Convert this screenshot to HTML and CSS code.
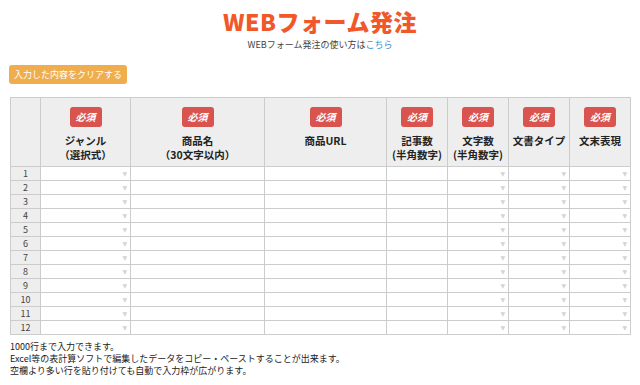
FILE: index.html
```html
<!DOCTYPE html>
<html lang="ja">
<head>
    <meta charset="UTF-8">
    <title>WEBフォーム発注</title>
    <link rel="stylesheet" href="styles.css">
</head>
<body>
    <h1 class="title">WEBフォーム発注</h1>
    <p class="subtitle">WEBフォーム発注の使い方は<a href="#">こちら</a></p>

    <button class="clear-btn">入力した内容をクリアする</button>

    <table class="order-table">
        <thead>
            <tr>
                <th class="num"></th>
                <th class="c-genre"><span class="req">必須</span><span class="label">ジャンル<br>（選択式）</span></th>
                <th class="c-name"><span class="req">必須</span><span class="label">商品名<br>（30文字以内）</span></th>
                <th class="c-url"><span class="req">必須</span><span class="label">商品URL</span></th>
                <th class="c-sm"><span class="req">必須</span><span class="label">記事数<br>(半角数字)</span></th>
                <th class="c-sm"><span class="req">必須</span><span class="label">文字数<br>(半角数字)</span></th>
                <th class="c-sm"><span class="req">必須</span><span class="label">文書タイプ</span></th>
                <th class="c-sm"><span class="req">必須</span><span class="label">文末表現</span></th>
            </tr>
        </thead>
        <tbody id="rows"></tbody>
    </table>

    <div class="notes">
        <p>1000行まで入力できます。</p>
        <p>Excel等の表計算ソフトで編集したデータをコピー・ペーストすることが出来ます。</p>
        <p>空欄より多い行を貼り付けても自動で入力枠が広がります。</p>
    </div>

    <script>
        // 12行分の入力枠 (true = プルダウン)
        const cols = [true, false, false, false, true, true, true];
        const tbody = document.getElementById("rows");
        for (let i = 1; i <= 12; i++) {
            let html = `<td class="num">${i}</td>`;
            cols.forEach(function (sel) {
                html += sel ? `<td class="select"><span class="arrow">▼</span></td>` : `<td></td>`;
            });
            const tr = document.createElement("tr");
            tr.innerHTML = html;
            tbody.appendChild(tr);
        }
    </script>
</body>
</html>
```

FILE: styles.css
```css
body {
    margin: 0;
    padding: 0 10px;
    font-family: "Noto Sans CJK JP", "Liberation Sans", sans-serif;
    color: #333;
    background: #fff;
}
.title {
    margin: 0;
    padding-top: 5px;
    text-align: center;
    font-size: 23px;
    line-height: 32px;
    font-weight: 900;
    color: #f0582a;
    letter-spacing: 0.5px;
}
.subtitle {
    margin: 1px 0 0;
    text-align: center;
    font-size: 9px;
    line-height: 14px;
    color: #444;
}
.subtitle a {
    color: #3a8fd0;
    text-decoration: none;
}
.clear-btn {
    display: block;
    margin: 13px 0 0 -1px;
    width: 118px;
    height: 19px;
    padding: 0;
    border: none;
    border-radius: 3px;
    background: #f0ad4e;
    color: #fff;
    font-family: inherit;
    font-size: 9px;
}
.order-table {
    margin-top: 13px;
    border-collapse: collapse;
    table-layout: fixed;
    width: 621px;
}
.order-table th,
.order-table td {
    border: 1px solid #ccc;
    padding: 0;
}
.order-table th {
    height: 68px;
    background: #eee;
    vertical-align: top;
    font-size: 10.5px;
    line-height: 14px;
    font-weight: bold;
    color: #222;
}
.order-table th.num {
    width: 29px;
}
.c-genre { width: 89px; }
.c-name { width: 133px; }
.c-url { width: 121px; }
.c-sm { width: 60px; }
.req {
    display: block;
    width: 32px;
    height: 20px;
    margin: 9px auto 7px;
    border-radius: 3px;
    background: #d9534f;
    color: #fff;
    font-size: 10px;
    line-height: 20px;
    font-weight: bold;
    font-style: italic;
}
.label {
    display: block;
    white-space: nowrap;
}
.order-table tbody tr {
    height: 14px;
}
.order-table td {
    height: 13px;
    font-size: 9px;
    line-height: 12px;
    background: #fff;
    overflow: hidden;
}
.order-table td.num {
    background: #eee;
    text-align: center;
    color: #444;
}
.order-table td.select {
    text-align: right;
}
.arrow {
    display: inline-block;
    vertical-align: top;
    padding-right: 3px;
    font-family: "DejaVu Sans", sans-serif;
    font-size: 6px;
    line-height: 12px;
    color: #d4d4d4;
}
.notes {
    margin-top: 6px;
    font-size: 9px;
    line-height: 12px;
    color: #222;
}
.notes p {
    margin: 0;
}
```
